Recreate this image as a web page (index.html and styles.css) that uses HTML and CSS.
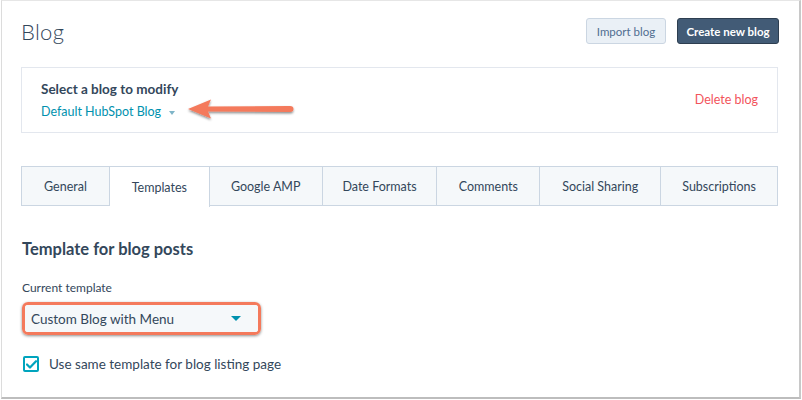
FILE: index.html
```html
<!DOCTYPE html>
<html lang="en">
<head>
  <meta charset="UTF-8" />
  <meta name="viewport" content="width=device-width, initial-scale=1.0"/>
  <title>Blog settings</title>
  <link rel="stylesheet" href="styles.css">
</head>
<body>
  <div class="window">
    <header class="page-header">
      <h1>Blog</h1>
      <div class="actions">
        <button class="btn btn-secondary">Import blog</button>
        <button class="btn btn-primary">Create new blog</button>
      </div>
    </header>

    <section class="blog-picker">
      <div>
        <h2>Select a blog to modify</h2>
        <a class="blog-select" href="#">Default HubSpot Blog <span class="caret-small"></span></a>
      </div>
      <a class="delete-link" href="#">Delete blog</a>

      <!-- annotation arrow -->
      <svg class="callout-arrow" width="112" height="26" viewBox="0 0 112 26">
        <defs>
          <filter id="sh" x="-10%" y="-30%" width="120%" height="180%">
            <feDropShadow dx="0" dy="1.5" stdDeviation="1" flood-color="#000" flood-opacity="0.45"/>
          </filter>
        </defs>
        <g filter="url(#sh)" fill="#f47a5c">
          <path d="M2 12 L25 2.5 L22 9.5 L104 9 Q107.5 9 107.5 12 Q107.5 15 104 15 L22 14.5 L25 21.5 Z"/>
        </g>
      </svg>
    </section>

    <nav class="tabs">
      <a class="tab" href="#">General</a>
      <a class="tab active" href="#">Templates</a>
      <a class="tab" href="#">Google AMP</a>
      <a class="tab" href="#">Date Formats</a>
      <a class="tab" href="#">Comments</a>
      <a class="tab" href="#">Social Sharing</a>
      <a class="tab" href="#">Subscriptions</a>
    </nav>

    <section class="template-settings">
      <h3>Template for blog posts</h3>
      <label class="field-label">Current template</label>
      <div class="highlight">
        <div class="select">
          <span>Custom Blog with Menu</span>
          <span class="caret"></span>
        </div>
      </div>
      <label class="checkbox-row">
        <span class="checkbox">
          <svg width="11" height="9" viewBox="0 0 11 9"><path d="M1 4.5 L4 7.5 L10 1.2" fill="none" stroke="#00a4bd" stroke-width="2.2" stroke-linecap="round" stroke-linejoin="round"/></svg>
        </span>
        Use same template for blog listing page
      </label>
    </section>
  </div>
</body>
</html>
```

FILE: styles.css
```css
body {
  margin: 0;
  font-family: 'Lato', 'Open Sans', sans-serif;
  color: #33475b;
  background: #fff;
}

.window {
  margin-left: 1px;
  width: 797px;
  height: 396px;
  border-top: 1px solid #e6e6e6;
  border-left: 1px solid #dcdcdc;
  border-right: 2px solid #c8c8c8;
  border-bottom: 2px solid #bdbdbd;
  box-sizing: content-box;
  overflow: hidden;
}

.page-header {
  display: flex;
  justify-content: space-between;
  align-items: flex-start;
  padding: 17px 20px 0 19px;
  height: 49px;
}

.page-header h1 {
  margin: 0;
  font-size: 22px;
  line-height: 28px;
  font-weight: 300;
  letter-spacing: 0.3px;
}

.actions {
  display: flex;
  gap: 11px;
}

.btn {
  font-family: inherit;
  font-size: 11.5px;
  height: 26px;
  border-radius: 3px;
  padding: 0;
  white-space: nowrap;
  box-sizing: border-box;
  cursor: pointer;
}

.btn-secondary {
  background: #eaf0f6;
  border: 1px solid #cbd6e2;
  color: #506e91;
  width: 80px;
  margin-left: 1px;
}

.btn-primary {
  background: #425b76;
  border: 1px solid #2d3e50;
  color: #fff;
  font-weight: 700;
  width: 102px;
}

.blog-picker {
  position: relative;
  margin: 0 21px 0 19px;
  height: 64px;
  border: 1px solid #e3e7ee;
  display: flex;
  justify-content: space-between;
  align-items: center;
  padding: 0 19px;
}

.blog-picker h2 {
  margin: 0 0 3px;
  font-size: 13.5px;
  font-weight: 700;
}

.blog-select {
  color: #0091ae;
  font-size: 12.5px;
  text-decoration: none;
}

.caret-small {
  display: inline-block;
  margin-left: 5px;
  vertical-align: middle;
  border-left: 3.5px solid transparent;
  border-right: 3.5px solid transparent;
  border-top: 4px solid #7fb5c8;
}

.delete-link {
  color: #f2545b;
  font-size: 12.5px;
  text-decoration: none;
  margin-top: -2px;
}

.callout-arrow {
  position: absolute;
  left: 164px;
  top: 29px;
}

.tabs {
  display: flex;
  margin: 33px 21px 0 19px;
  height: 40px;
}

.tab {
  display: flex;
  align-items: center;
  justify-content: center;
  background: #f5f8fa;
  border: 1px solid #cbd6e2;
  border-left: none;
  color: #33475b;
  font-size: 12.5px;
  text-decoration: none;
  box-sizing: border-box;
}

.tab:first-child { border-left: 1px solid #cbd6e2; }

.tab:nth-child(1) { width: 89px; }
.tab:nth-child(2) { width: 100px; }
.tab:nth-child(3) { width: 113px; }
.tab:nth-child(4) { width: 115px; }
.tab:nth-child(5) { width: 103px; }
.tab:nth-child(6) { width: 121px; }
.tab:nth-child(7) { width: 117px; }

.tab.active {
  background: #fff;
  border-bottom: none;
  height: 41px;
}

.template-settings {
  padding: 0 20px 0 20px;
}

.template-settings h3 {
  margin: 33px 0 0;
  font-size: 16.5px;
  font-weight: 700;
  line-height: 20px;
}

.field-label {
  display: block;
  margin-top: 22px;
  font-size: 12px;
  line-height: 14px;
}

.highlight {
  margin-top: 7px;
  width: 233px;
  border: 3px solid #f47a5c;
  border-radius: 6px;
  box-shadow: 0 1px 3px rgba(0, 0, 0, 0.45);
}

.select {
  height: 27px;
  background: #f5f8fa;
  border-radius: 3px;
  display: flex;
  align-items: center;
  justify-content: space-between;
  padding: 0 17px 0 6px;
  font-size: 13.5px;
}

.caret {
  border-left: 5px solid transparent;
  border-right: 5px solid transparent;
  border-top: 5px solid #0091ae;
}

.checkbox-row {
  display: flex;
  align-items: center;
  gap: 10px;
  margin-top: 21px;
  font-size: 13.5px;
}

.checkbox {
  width: 12px;
  height: 12px;
  border: 2px solid #00a4bd;
  border-radius: 2px;
  display: flex;
  align-items: center;
  justify-content: center;
  margin-left: 1px;
}
```
